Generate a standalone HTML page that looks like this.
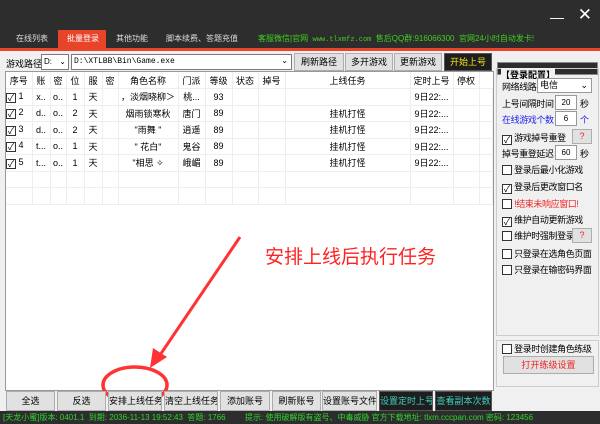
<!DOCTYPE html><html><head><meta charset="utf-8"><style>
*{margin:0;padding:0;box-sizing:border-box}
body{width:600px;height:424px;overflow:hidden;background:#f0f0f0;font-family:"Liberation Sans","Noto Sans CJK SC",sans-serif;font-size:9px;color:#000;position:relative}
.a{position:absolute;white-space:nowrap}
.btn{position:absolute;background:#e1e1e1;border:1px solid #adadad;text-align:center;font-size:9px;line-height:16px;white-space:nowrap;overflow:hidden}
.dk{background:#1e1e1e;border:1px solid #555}
table{border-collapse:collapse;position:absolute;left:6px;top:72px;background:#fff;table-layout:fixed;width:486px}
td{border-right:1px solid #eee;border-bottom:1px solid #eee;height:16.5px;text-align:center;font-size:9px;white-space:nowrap;overflow:hidden;padding:0}
.cb{display:inline-block;width:10px;height:10px;border:1px solid #333;background:#fff;vertical-align:-2px;position:relative;font-size:9px;line-height:8px;text-align:center;letter-spacing:0}
.r{position:absolute;left:502px;font-size:9px;white-space:nowrap;letter-spacing:-0.4px}
.in{position:absolute;left:555px;width:22px;height:15px;background:#fff;border:1px solid #999;font-size:8px;text-align:center;line-height:13px}
</style></head><body>
<div class="a" style="left:0;top:0;width:600px;height:48px;background:#2d2d2d"></div>
<div class="a" style="right:36px;top:9px;color:#fff;font-size:14px">—</div>
<div class="a" style="right:8px;top:5px;color:#fff;font-size:17px">✕</div>
<div class="a" style="left:0;top:48px;width:600px;height:3px;background:#e8442a"></div>
<div class="a" style="left:58px;top:30px;width:48px;height:18px;background:#e8442a"></div>
<div class="a" style="left:16px;top:33px;color:#ddd;font-size:8px">在线列表</div>
<div class="a" style="left:67px;top:33px;color:#fff;font-size:8px">批量登录</div>
<div class="a" style="left:116px;top:33px;color:#ddd;font-size:8px">其他功能</div>
<div class="a" style="left:166px;top:33px;color:#ddd;font-size:8px">脚本续费、答题充值</div>
<div class="a" style="left:258px;top:33px;color:#3ecf1e;font-size:8px">客服微信|官网 &nbsp;<span style="font-family:'Liberation Mono';font-size:7px">www.tlxmfz.com</span> &nbsp;售后QQ群:916066300 &nbsp;官网24小时自动发卡!</div>

<div class="a" style="left:6px;top:57px">游戏路径:</div>
<div class="a" style="left:41px;top:54px;width:28px;height:16px;background:#fff;border:1px solid #7a7a7a;font-size:8px;line-height:14px;padding-left:2px">D: <span style="position:absolute;right:2px">⌄</span></div>
<div class="a" style="left:71px;top:54px;width:221px;height:16px;background:#fff;border:1px solid #7a7a7a;font-size:8px;line-height:14px;padding-left:2px;font-family:'Liberation Mono'">D:\XTLBB\Bin\Game.exe<span style="position:absolute;right:3px">⌄</span></div>
<div class="btn" style="left:294px;top:53px;width:50px;height:18px">刷新路径</div>
<div class="btn" style="left:345px;top:53px;width:48px;height:18px">多开游戏</div>
<div class="btn" style="left:394px;top:53px;width:48px;height:18px">更新游戏</div>
<div class="btn dk" style="left:444px;top:53px;width:48px;height:18px;color:#f3e11a">开始上号</div>

<div class="a" style="left:5px;top:71px;width:489px;height:320px;background:#fff;border:1px solid #999"></div>
<table>
<colgroup><col style="width:26px"><col style="width:18px"><col style="width:16px"><col style="width:18px"><col style="width:18px"><col style="width:16px"><col style="width:60px"><col style="width:27px"><col style="width:27px"><col style="width:26px"><col style="width:27px"><col style="width:125px"><col style="width:43px"><col style="width:26px"><col style="width:13px"></colgroup>
<tr><td>序号</td><td>账</td><td>密</td><td>位</td><td>服</td><td>密</td><td>角色名称</td><td>门派</td><td>等级</td><td>状态</td><td>掉号</td><td>上线任务</td><td>定时上号</td><td>停权</td><td style="border-right:none"></td></tr>
<tr><td style="text-align:left"><span class="cb">✓</span> 1</td><td>x..</td><td>o..</td><td>1</td><td>天</td><td></td><td>，淡烟晓柳＞</td><td>桃...</td><td>93</td><td></td><td></td><td></td><td>9日22:...</td><td></td><td></td></tr>
<tr><td style="text-align:left"><span class="cb">✓</span> 2</td><td>d..</td><td>o..</td><td>2</td><td>天</td><td></td><td>烟雨锁寒秋</td><td>唐门</td><td>89</td><td></td><td></td><td>挂机打怪</td><td>9日22:...</td><td></td><td></td></tr>
<tr><td style="text-align:left"><span class="cb">✓</span> 3</td><td>d..</td><td>o..</td><td>2</td><td>天</td><td></td><td>"雨舞 "</td><td>逍遥</td><td>89</td><td></td><td></td><td>挂机打怪</td><td>9日22:...</td><td></td><td></td></tr>
<tr><td style="text-align:left"><span class="cb">✓</span> 4</td><td>t...</td><td>o..</td><td>1</td><td>天</td><td></td><td>" 花白"</td><td>鬼谷</td><td>89</td><td></td><td></td><td>挂机打怪</td><td>9日22:...</td><td></td><td></td></tr>
<tr><td style="text-align:left"><span class="cb">✓</span> 5</td><td>t...</td><td>o..</td><td>1</td><td>天</td><td></td><td>"相思 ✧</td><td>峨嵋</td><td>89</td><td></td><td></td><td>挂机打怪</td><td>9日22:...</td><td></td><td></td></tr>
<tr><td></td><td></td><td></td><td></td><td></td><td></td><td></td><td></td><td></td><td></td><td></td><td></td><td></td><td></td><td></td></tr>
<tr><td></td><td></td><td></td><td></td><td></td><td></td><td></td><td></td><td></td><td></td><td></td><td></td><td></td><td></td><td></td></tr>
</table>

<div class="a" style="left:265px;top:242px;color:#f22;font-size:19px">安排上线后执行任务</div>
<svg class="a" style="left:0;top:0" width="600" height="424"><line x1="240" y1="237" x2="160" y2="355" stroke="#f33" stroke-width="3"/><polygon points="150,368 153,348 167,357" fill="#f33"/><ellipse cx="135" cy="385" rx="32" ry="18" fill="none" stroke="#f33" stroke-width="3.5"/></svg>

<div class="btn" style="left:6px;top:391px;width:49px;height:20px;line-height:18px">全选</div>
<div class="btn" style="left:57px;top:391px;width:49px;height:20px;line-height:18px">反选</div>
<div class="btn" style="left:108px;top:391px;width:54px;height:20px;line-height:18px">安排上线任务</div>
<div class="btn" style="left:164px;top:391px;width:54px;height:20px;line-height:18px">清空上线任务</div>
<div class="btn" style="left:220px;top:391px;width:50px;height:20px;line-height:18px">添加账号</div>
<div class="btn" style="left:272px;top:391px;width:49px;height:20px;line-height:18px">刷新账号</div>
<div class="btn" style="left:322px;top:391px;width:55px;height:20px;line-height:18px">设置账号文件</div>
<div class="btn dk" style="left:379px;top:391px;width:54px;height:20px;line-height:18px;color:#3cd0c0">设置定时上号</div>
<div class="btn dk" style="left:435px;top:391px;width:57px;height:20px;line-height:18px;color:#3cd0c0">查看副本次数</div>

<div class="a" style="left:0;top:411px;width:600px;height:13px;background:#2d2d2d"></div>
<div class="a" style="left:3px;top:411px;color:#2ed52e;font-size:8px;line-height:13px">[天龙小蜜]版本: 0401.1 &nbsp;到期: 2036-11-13 19:52:43 &nbsp;答题: 1766</div>
<div class="a" style="left:245px;top:411px;color:#2ed52e;font-size:8px;line-height:13px">提示: 使用破解版有盗号、中毒威胁 官方下载地址: tlxm.cccpan.com 密码: 123456</div>

<div class="a" style="left:497px;top:62px;width:101px;height:13px;background:#2d2d2d;border:1px solid #888"></div>
<div class="a" style="left:496px;top:68px;width:103px;height:268px;border:1px solid #ccc"></div>
<div class="a" style="left:501px;top:68px;font-weight:bold;background:#f0f0f0">【登录配置】</div>
<div class="r" style="top:80px">网络线路</div>
<div class="a" style="left:537px;top:78px;width:55px;height:15px;background:#fff;border:1px solid #999;font-size:9px;padding-left:2px;line-height:13px">电信<span style="position:absolute;right:3px">⌄</span></div>
<div class="r" style="top:97px">上号间隔时间</div>
<div class="in" style="top:95px">20</div><div class="a" style="left:580px;top:97px">秒</div>
<div class="r" style="top:113px;color:#22e">在线游戏个数</div>
<div class="in" style="top:111px">6</div><div class="a" style="left:580px;top:113px;color:#22e">个</div>
<div class="r" style="top:131px"><span class="cb">✓</span> 游戏掉号重登</div>
<div class="btn" style="left:572px;top:129px;width:20px;height:15px;color:#e22;line-height:13px">?</div>
<div class="r" style="top:147px">掉号重登延迟</div>
<div class="in" style="top:145px">60</div><div class="a" style="left:580px;top:147px">秒</div>
<div class="r" style="top:163px"><span class="cb"></span> 登录后最小化游戏</div>
<div class="r" style="top:180px"><span class="cb">✓</span> 登录后更改窗口名</div>
<div class="r" style="top:197px"><span class="cb"></span> <span style="color:#e22">!结束未响应窗口!</span></div>
<div class="r" style="top:213px"><span class="cb">✓</span> 维护自动更新游戏</div>
<div class="r" style="top:229px"><span class="cb"></span> 维护时强制登录</div>
<div class="btn" style="left:572px;top:228px;width:20px;height:15px;color:#e22;line-height:13px">?</div>
<div class="r" style="top:247px"><span class="cb"></span> 只登录在选角色页面</div>
<div class="r" style="top:263px"><span class="cb"></span> 只登录在输密码界面</div>
<div class="a" style="left:496px;top:340px;width:103px;height:47px;border:1px solid #ccc"></div>
<div class="r" style="top:342px"><span class="cb"></span> 登录时创建角色练级</div>
<div class="btn" style="left:503px;top:356px;width:91px;height:18px;color:#e22">打开练级设置</div>
</body></html>
